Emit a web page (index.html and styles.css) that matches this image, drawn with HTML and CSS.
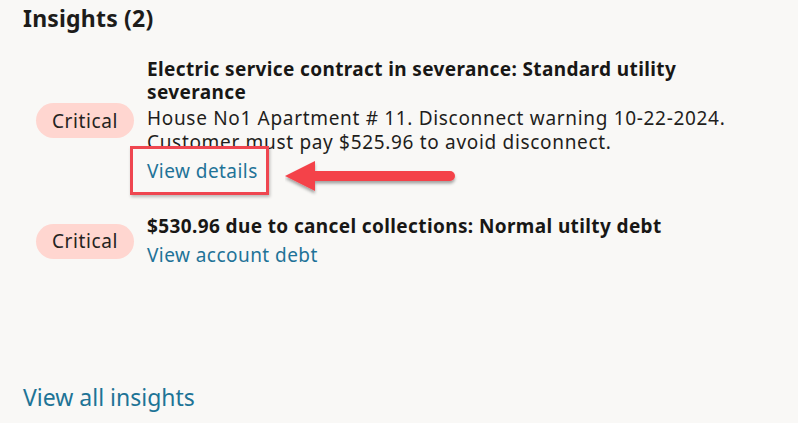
FILE: index.html
```html
<!DOCTYPE html>
<html>
<head>
<meta charset="utf-8">
<link rel="stylesheet" href="styles.css">
</head>
<body>
<div class="panel">
  <h2 class="heading">Insights (2)</h2>
  <div class="list">
    <div class="item">
      <div class="badge-col"><span class="badge">Critical</span></div>
      <div class="content">
        <div class="title">Electric service contract in severance: Standard utility severance</div>
        <div class="desc">House No1 Apartment # 11. Disconnect warning 10-22-2024. Customer must pay $525.96 to avoid disconnect.</div>
        <div class="link-row">
          <a class="link highlight" href="#">View details</a>
          <svg class="arrow" width="180" height="44" viewBox="0 0 180 44">
            <defs>
              <filter id="sh" x="-10%" y="-30%" width="120%" height="180%">
                <feDropShadow dx="0" dy="2.5" stdDeviation="1.8" flood-color="#000" flood-opacity="0.35"/>
              </filter>
            </defs>
            <g filter="url(#sh)">
              <line x1="28" y1="20" x2="165" y2="20" stroke="#f4424a" stroke-width="10" stroke-linecap="round"/>
              <polygon points="0,20 30,5 30,35" fill="#f4424a"/>
            </g>
          </svg>
        </div>
      </div>
    </div>
    <div class="item">
      <div class="badge-col"><span class="badge">Critical</span></div>
      <div class="content">
        <div class="title">$530.96 due to cancel collections: Normal utilty debt</div>
        <div class="link-row"><a class="link" href="#">View account debt</a></div>
      </div>
    </div>
  </div>
  <a class="all-link" href="#">View all insights</a>
</div>
</body>
</html>
```

FILE: styles.css
```css
html, body {
  margin: 0;
  padding: 0;
  background: #f9f8f6;
}
body {
  font-family: "Noto Sans", "Open Sans", sans-serif;
  color: #161513;
  width: 798px;
  height: 423px;
  overflow: hidden;
}
.panel {
  padding: 3px 0 0 23px;
  display: flex;
  flex-direction: column;
}
.heading {
  margin: 0;
  font-size: 23px;
  font-weight: 700;
  line-height: 30px;
  letter-spacing: 0.2px;
  color: #1d1c1a;
}
.list {
  display: flex;
  flex-direction: column;
  gap: 32px;
  margin-top: 25px;
  margin-left: 13px;
}
.item {
  display: flex;
  align-items: center;
  gap: 13px;
}
.badge-col {
  width: 98px;
  flex: none;
}
.badge {
  display: flex;
  align-items: center;
  justify-content: center;
  width: 98px;
  height: 35px;
  border-radius: 18px;
  background: #ffd6d0;
  color: #242321;
  font-size: 19px;
  letter-spacing: 0.6px;
}
.content {
  display: flex;
  flex-direction: column;
  width: 600px;
}
.title {
  font-weight: 700;
  font-size: 19px;
  line-height: 23px;
  letter-spacing: 0.38px;
  color: #181715;
}
.desc {
  font-size: 19px;
  line-height: 24px;
  letter-spacing: 0.68px;
  margin-top: 2px;
  color: #1f1e1c;
}
.link-row {
  display: flex;
  align-items: center;
  position: relative;
  margin-top: 5px;
}
.link {
  color: #1f7398;
  text-decoration: none;
  font-size: 19px;
  line-height: 24px;
  letter-spacing: 0.45px;
}
.highlight {
  position: relative;
}
.highlight::after {
  content: "";
  position: absolute;
  top: -13px;
  bottom: -12px;
  left: -17px;
  right: -11px;
  border: 3px solid #ef4650;
  box-shadow: 1px 2px 3px rgba(0, 0, 0, 0.25);
}
.arrow {
  position: absolute;
  left: 138px;
  top: -3px;
}
.all-link {
  color: #1e7496;
  text-decoration: none;
  font-size: 23px;
  line-height: 30px;
  margin-top: 115px;
}
```
